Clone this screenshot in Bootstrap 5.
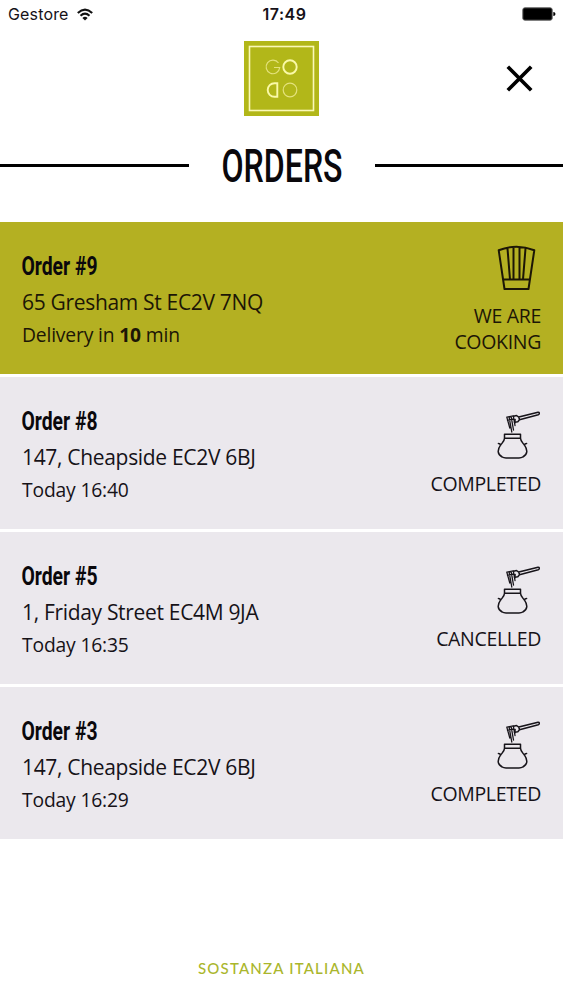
<!DOCTYPE html>
<html lang="en">
<head>
<meta charset="utf-8">
<meta name="viewport" content="width=device-width, initial-scale=1">
<title>Orders</title>
<link href="https://cdn.jsdelivr.net/npm/bootstrap@5.3.0/dist/css/bootstrap.min.css" rel="stylesheet">
<style>
body{font-family:"Open Sans","Noto Sans",sans-serif;color:#161218;background:#fff;height:1000px;overflow:hidden}
svg{display:block;flex:none;overflow:visible}
.statusbar{height:28px;padding:0 7px 0 8px;font:400 16px/28px Inter,sans-serif;letter-spacing:.15px}
.clock{font-weight:600;letter-spacing:.5px;padding-left:6px}
.brandbar{height:101px;padding:13px 30px 0 244px}
.close-btn{padding:0;border:0;background:none;height:75px}
.titlebar{height:93px;padding-bottom:20px}
.rule{height:3px;background:#000}
.condensed{font-family:Roboto,sans-serif;fill:#0a080c}
.orders{gap:2.6px}
.order{height:152.3px;padding:0 22px;background:#ebe8ed}
.order.active{background:#b4b022;color:#1c1606}
.info{padding-top:26px}
.address{font-size:21px;letter-spacing:-.32px;line-height:32px;margin-top:6px;white-space:nowrap}
.when{font-size:19.3px;letter-spacing:-.17px;line-height:34px;white-space:nowrap}
.state{font-size:19.5px;letter-spacing:-.32px;line-height:26px;padding-top:22px;white-space:nowrap}
.state .pot{margin:11px 1px 11px 0}
.state .hat{margin:1px 5px 12px 0}
.tagline{font:500 15px/20px Lato,sans-serif;letter-spacing:1.2px;color:#aab62c;margin-bottom:22px}
</style>
</head>
<body class="d-flex flex-column">
<svg width="0" height="0" class="position-absolute">
<defs>
<symbol id="pot" viewBox="0 0 44 50">
<g fill="none" stroke="#17141a" stroke-width="1.5" stroke-linecap="round" stroke-linejoin="round">
<path d="M8.500 24.300H24.500V28.300H8.500ZM8.500 28.300C8.500 31 6.500 32.500 4.500 35.200C1.200 40 1.200 44.300 6.200 47C7.400 47.800 8.500 47.900 10 47.900H23C24.500 47.900 25.600 47.800 26.800 47C31.800 44.300 31.800 40 28.500 35.200C26.500 32.500 24.500 31 24.500 28.300M4.500 35.200C4.300 34 3.500 33.500 2.400 33.500M28.500 35.200C28.700 34 29.500 33.500 30.600 33.500"/>
<path d="M22.800 7.100L42 2.200C43.600 2 43.800 4.200 42.300 4.700L23.500 9.700M17.500 6.200L20.500 5.500L22.800 7.100L23.500 9.700L21.800 11.700L18.500 12.200"/>
<path d="M10.800 7.200L13.800 18M13 6.600L15.800 22M15.100 6.300L17.500 20M17.300 5.900L19 15.500M19.200 9.500L18.800 14M10.800 7.200L17.300 5.900M11.500 10.300L18 9" stroke-width="1.300"/>
</g>
</symbol>
</defs>
</svg>

<div class="statusbar d-flex align-items-center justify-content-between position-relative">
<div class="d-flex align-items-center gap-2"><span>Gestore</span>
<svg width="16" height="13" viewBox="0 0 16 13" fill="none" stroke="#111" stroke-width="2.1"><path d="M.8 4.900Q8-1.700 15.200 4.900M3.500 7.700Q8 3.500 12.500 7.700"/><path d="M8 12.500L5.400 9.900Q8 7.700 10.600 9.900Z" fill="#111" stroke="none"/></svg></div>
<b class="clock position-absolute start-50 translate-middle-x">17:49</b>
<svg width="34" height="14" viewBox="0 0 34 14"><rect x=".8" y=".8" width="29.400" height="12.400" rx="2" fill="#000" stroke="#666" stroke-width="1"/><path d="M31.300 5Q33.500 5.200 33.500 7T31.300 9Z"/></svg>
</div>

<header class="brandbar d-flex justify-content-between">
<svg width="75" height="75" viewBox="0 0 75 75" fill="none"><path fill="#b2b719" d="M0 0H75V75H0Z"/><rect x="5.500" y="5.500" width="64" height="64" stroke="#faf9b8" stroke-width="1.600"/>
<g stroke="#e4e27c" stroke-width="1.200"><path d="M34.500 22A6.800 6.800 0 1 0 35.700 26.500H30"/><circle cx="46" cy="49" r="6.800"/></g>
<g stroke="#faf9a8" stroke-width="1.900"><circle cx="46" cy="26" r="6.700"/><path d="M33.300 42.200V55.800H30.500A6.800 6.800 0 0 1 30.500 42.200Z"/></g></svg>
<button class="close-btn d-flex align-items-center" aria-label="Close"><svg width="27" height="27" viewBox="0 0 27 27"><path d="M1.800 1.800L25.200 25.200M25.200 1.800L1.800 25.200" stroke="#000" stroke-width="3.700"/></svg></button>
</header>

<div class="titlebar d-flex align-items-center">
<div class="rule flex-fill"></div>
<svg width="186" height="66" class="condensed" role="heading" aria-level="1"><text x="32.500" y="48.500" font-size="46" font-weight="500" textLength="121" lengthAdjust="spacingAndGlyphs">ORDERS</text></svg>
<div class="rule flex-fill"></div>
</div>

<main class="orders d-flex flex-column">
<section class="order active d-flex justify-content-between">
<div class="info"><svg width="80" height="32" class="condensed"><text x="-.5" y="27" font-size="26" font-weight="700" textLength="76" lengthAdjust="spacingAndGlyphs">Order #9</text></svg>
<div class="address">65 Gresham St EC2V 7NQ</div><div class="when">Delivery in <b>10</b> min</div></div>
<div class="state d-flex flex-column align-items-end text-end"><svg class="hat" width="39" height="46" viewBox="0 0 39 46" fill="none" stroke="#1c1606" stroke-width="2" stroke-linejoin="round"><path d="M1.700 5.200Q19.500-1.800 37.300 5.200L31.500 44H7.500ZM6 34.500H33M10.500 3.500L13 34.500M16.500 2.500V34.500M22.500 2.500V34.500M28.500 3.500L26 34.500"/></svg>
<div>WE ARE<br>COOKING</div></div>
</section>
<section class="order d-flex justify-content-between">
<div class="info"><svg width="80" height="32" class="condensed"><text x="-.5" y="27" font-size="26" font-weight="700" textLength="76" lengthAdjust="spacingAndGlyphs">Order #8</text></svg>
<div class="address">147, Cheapside EC2V 6BJ</div><div class="when">Today 16:40</div></div>
<div class="state d-flex flex-column align-items-end text-end"><svg class="pot" width="44" height="50"><use href="#pot"/></svg><div>COMPLETED</div></div>
</section>
<section class="order d-flex justify-content-between">
<div class="info"><svg width="80" height="32" class="condensed"><text x="-.5" y="27" font-size="26" font-weight="700" textLength="76" lengthAdjust="spacingAndGlyphs">Order #5</text></svg>
<div class="address">1, Friday Street EC4M 9JA</div><div class="when">Today 16:35</div></div>
<div class="state d-flex flex-column align-items-end text-end"><svg class="pot" width="44" height="50"><use href="#pot"/></svg><div>CANCELLED</div></div>
</section>
<section class="order d-flex justify-content-between">
<div class="info"><svg width="80" height="32" class="condensed"><text x="-.5" y="27" font-size="26" font-weight="700" textLength="76" lengthAdjust="spacingAndGlyphs">Order #3</text></svg>
<div class="address">147, Cheapside EC2V 6BJ</div><div class="when">Today 16:29</div></div>
<div class="state d-flex flex-column align-items-end text-end"><svg class="pot" width="44" height="50"><use href="#pot"/></svg><div>COMPLETED</div></div>
</section>
</main>
<footer class="tagline mt-auto text-center">SOSTANZA ITALIANA</footer>
<script src="https://cdn.jsdelivr.net/npm/bootstrap@5.3.0/dist/js/bootstrap.bundle.min.js"></script>
</body>
</html>
